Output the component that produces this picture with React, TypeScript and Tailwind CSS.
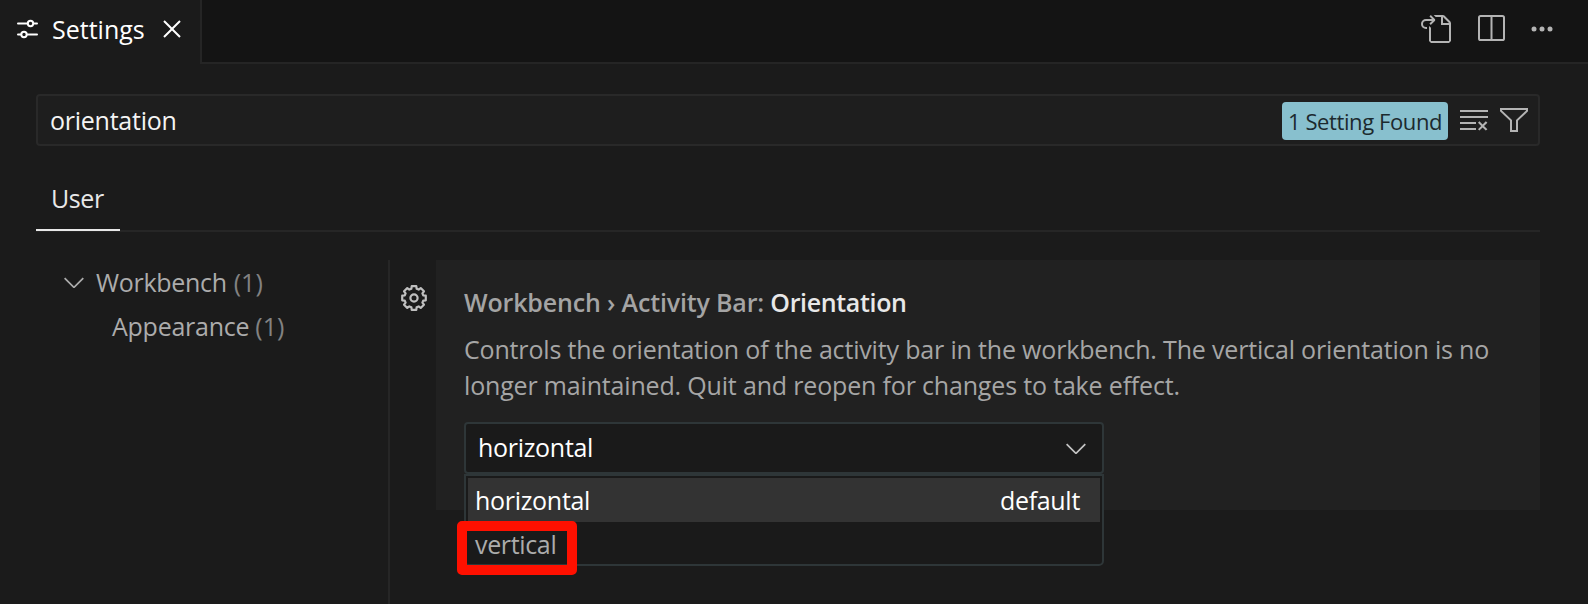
import React from 'react';
import {
  VscChevronDown,
  VscClearAll,
  VscClose,
  VscFilter,
  VscGoToFile,
} from 'react-icons/vsc';

type IconProps = { className?: string };

function SlidersIcon({ className }: IconProps) {
  return (
    <svg viewBox="0 0 32 32" fill="none" stroke="currentColor" strokeWidth="2" strokeLinecap="round" className={className}>
      <path d="M7 10.5h9.6M23.4 10.5H26M7 21.5h2.6M16.4 21.5H26" />
      <circle cx="19.5" cy="10.5" r="2.7" />
      <circle cx="13" cy="21.5" r="2.7" />
    </svg>
  );
}

function SplitIcon({ className }: IconProps) {
  return (
    <svg viewBox="0 0 32 32" fill="none" stroke="currentColor" strokeWidth="2" className={className}>
      <rect x="3" y="3" width="25" height="24" rx="1.6" />
      <path d="M15.5 3v24" />
    </svg>
  );
}

function DotsIcon({ className }: IconProps) {
  return (
    <svg viewBox="0 0 32 32" fill="currentColor" className={className}>
      <circle cx="8" cy="16" r="2.5" />
      <circle cx="16" cy="16" r="2.5" />
      <circle cx="24" cy="16" r="2.5" />
    </svg>
  );
}

const gearPoints = Array.from({ length: 8 }, (_, tooth) =>
  [
    [-11, 12],
    [11, 12],
    [16, 9.6],
    [29, 9.6],
  ].map(([angle, radius]) => {
    const a = ((tooth * 45 + angle) * Math.PI) / 180;
    return `${(16 + radius * Math.sin(a)).toFixed(2)},${(16 - radius * Math.cos(a)).toFixed(2)}`;
  }),
)
  .flat()
  .join(' ');

function GearIcon({ className }: IconProps) {
  return (
    <svg viewBox="0 0 32 32" fill="none" stroke="currentColor" strokeWidth="2.2" strokeLinejoin="round" className={className}>
      <polygon points={gearPoints} />
      <circle cx="16" cy="16" r="3.6" />
    </svg>
  );
}

function TabBar() {
  return (
    <header className="flex h-16 bg-[#141414]">
      <div className="flex w-[202px] items-center border-r-2 border-[#252525] bg-[#1b1b1b] pb-[6px] pl-[11px] text-white">
        <SlidersIcon className="size-8" />
        <span className="ml-[9px] w-[93px]">Settings</span>
        <VscClose className="ml-[11px] size-8" />
      </div>
      <div className="flex flex-1 items-center justify-end border-b-2 border-[#252525] pr-[30px] pb-1 text-[#b4b4b4]">
        <VscGoToFile className="size-8" />
        <SplitIcon className="ml-[25px] size-8" />
        <DotsIcon className="ml-[18px] size-8" />
      </div>
    </header>
  );
}

function SearchBox() {
  return (
    <div className="mt-[30px] flex h-[52px] items-center rounded-[4px] border-2 border-[#292929] bg-[#1e1e1e] pr-2 pl-3">
      <span className="flex-1 tracking-[-0.25px] text-[#f4f4f4]">orientation</span>
      <span className="mt-[2px] flex h-[38px] w-[166px] items-center justify-center rounded-[4px] bg-[#88c0ce] text-[22px] tracking-[-0.4px] whitespace-nowrap text-[#1c2a2e]">
        1 Setting Found
      </span>
      <VscClearAll className="ml-[10px] size-8 text-[#b4b4b4]" />
      <VscFilter className="ml-2 size-8 text-[#b4b4b4]" />
    </div>
  );
}

function Tree() {
  return (
    <nav className="w-[354px] shrink-0 border-r-2 border-[#262626] text-[#acacac]">
      <div className="flex h-11 items-center pl-[22px]">
        <VscChevronDown className="size-8" />
        <span className="ml-[6px] tracking-[-0.3px]">Workbench</span>
        <span className="ml-[7px] text-[#828282]">(1)</span>
      </div>
      <div className="flex h-11 items-center pl-[76px]">
        <span className="tracking-[-0.25px]">Appearance</span>
        <span className="ml-[6px] text-[#828282]">(1)</span>
      </div>
    </nav>
  );
}

function OrientationSelect() {
  return (
    <div className="relative mt-[19px] w-[640px]">
      <div className="flex h-[52px] items-center justify-between rounded-[4px] border-2 border-[#2e3638] bg-[#1a1a1a] pr-[10px] pl-3 text-white">
        <span className="pb-[2px] tracking-[-0.3px]">horizontal</span>
        <VscChevronDown className="size-8 text-[#c4c4c4]" />
      </div>
      <div className="absolute top-[52px] left-0 h-[92px] w-full rounded-b-[5px] border-2 border-[#2e3638] bg-[#1a1a1a] p-[2px]">
        <div className="flex h-11 items-center justify-between bg-[#333333] pr-5 pl-[7px] text-white">
          <span className="tracking-[-0.3px]">horizontal</span>
          <span className="tracking-[-0.3px]">default</span>
        </div>
        <div className="flex h-[42px] items-center pt-px pl-[7px] text-[#acacac]">
          <span className="tracking-[-0.35px]">vertical</span>
        </div>
      </div>
      <div className="absolute top-[99px] left-[-7px] h-[54px] w-[120px] rounded-[5px] border-[10px] border-[#ff1000]" />
    </div>
  );
}

function Setting() {
  return (
    <section className="flex flex-1">
      <div className="w-[46px] shrink-0 pt-[21.5px] pl-2 text-[#c0c0c0]">
        <GearIcon className="size-8" />
      </div>
      <div className="h-[250px] flex-1 bg-[#212121] pt-6 pl-7">
        <h2 className="flex h-9 items-center font-semibold whitespace-pre text-[#a4a4a4]">
          <span className="tracking-[-0.16px]">Workbench › Activity Bar: </span>
          <span className="tracking-[-0.35px] text-[#e8e8e8]">Orientation</span>
        </h2>
        <p className="mt-[11px] leading-9 whitespace-nowrap text-[#a6a6a6]">
          <span className="block tracking-[-0.17px]">
            Controls the orientation of the activity bar in the workbench. The vertical orientation is no
          </span>
          <span className="block tracking-[-0.17px]">
            longer maintained. Quit and reopen for changes to take effect.
          </span>
        </p>
        <OrientationSelect />
      </div>
    </section>
  );
}

export default function App() {
  return (
    <div className="h-[604px] w-[1588px] overflow-hidden bg-[#1b1b1b] font-['Open_Sans',sans-serif] text-[25px] leading-9">
      <TabBar />
      <main className="pr-12 pl-9">
        <SearchBox />
        <div className="mt-[22px] h-16 border-b-2 border-[#262626]">
          <div className="h-[63px] w-[84px] border-b-2 border-[#e8e8e8] pt-3 pl-[15px] text-[#e8e8e8]">
            <span className="tracking-[-0.4px]">User</span>
          </div>
        </div>
        <div className="mt-7 flex h-[344px]">
          <Tree />
          <Setting />
        </div>
      </main>
    </div>
  );
}
